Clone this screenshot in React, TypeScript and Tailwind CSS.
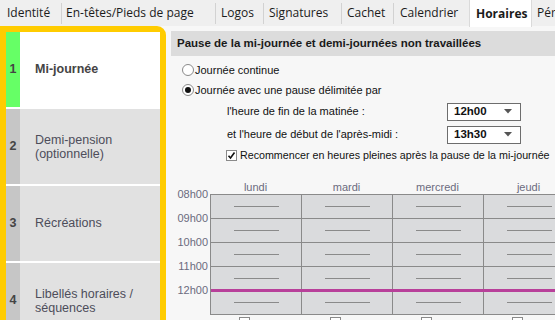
import React from "react";

const days = ["lundi", "mardi", "mercredi", "jeudi"];
const hours = ["08h00", "09h00", "10h00", "11h00", "12h00"];

function Sep() {
  return <div className="w-px h-[21px] bg-[#d2d2d2] shrink-0" />;
}

function Select({ value }: { value: string }) {
  return (
    <div className="w-[74px] h-[18px] border border-[#6d6d6d] bg-white flex items-center pl-[6px] pr-[8px] justify-between">
      <span className="font-bold text-[11.5px] text-[#111]">{value}</span>
      <svg width="8" height="5" viewBox="0 0 8 5">
        <path d="M0 0 L8 0 L4 4.5 Z" fill="#555" />
      </svg>
    </div>
  );
}

export default function App() {
  return (
    <div className="w-[555px] h-[320px] overflow-hidden bg-[#f7f7f7] font-['Liberation_Sans',Arial,sans-serif]">
      {/* Tab bar */}
      <div className="h-[26px] bg-[#efefef] flex items-center font-['Open_Sans',sans-serif] text-[12px] text-[#1b1b1b] whitespace-nowrap">
        <div className="w-[61px] pl-[7px] shrink-0">Identité</div>
        <Sep />
        <div className="w-[153px] pl-[4px] shrink-0">En-têtes/Pieds de page</div>
        <Sep />
        <div className="w-[47px] pl-[5px] shrink-0">Logos</div>
        <Sep />
        <div className="w-[77px] pl-[5px] shrink-0">Signatures</div>
        <Sep />
        <div className="w-[51px] pl-[5px] shrink-0">Cachet</div>
        <Sep />
        <div className="w-[75px] pl-[6px] shrink-0">Calendrier</div>
        <div className="w-[63px] h-[27px] self-start mb-[-1px] bg-white border-x border-[#dadada] pl-[6px] flex items-center font-bold shrink-0">
          Horaires
        </div>
        <div className="pl-[5px] shrink-0">Périodes</div>
      </div>

      <div className="flex items-start">
        {/* Left panel */}
        <div className="w-[166px] h-[320px] shrink-0 border-[6px] border-[#ffcc00] rounded-tr-[9px] bg-white flex flex-col gap-[2px] text-[12.5px] text-[#4d4d5a]">
          <div className="h-[75px] flex bg-white shrink-0">
            <div className="w-[14px] bg-[#66ff66] flex items-center justify-center font-bold text-[#444]">1</div>
            <div className="flex-1 flex items-center pl-[15px] font-bold text-[#444]">Mi-journée</div>
          </div>
          <div className="h-[75px] flex bg-[#e1e1e1] shrink-0">
            <div className="w-[14px] bg-[#c6c6c6] flex items-center justify-center font-bold text-[#444]">2</div>
            <div className="flex-1 flex items-center pl-[15px] leading-[14px]">
              Demi-pension
              <br />
              (optionnelle)
            </div>
          </div>
          <div className="h-[75px] flex bg-[#e1e1e1] shrink-0">
            <div className="w-[14px] bg-[#c6c6c6] flex items-center justify-center font-bold text-[#444]">3</div>
            <div className="flex-1 flex items-center pl-[15px]">Récréations</div>
          </div>
          <div className="h-[75px] flex bg-[#e1e1e1] shrink-0">
            <div className="w-[14px] bg-[#c6c6c6] flex items-center justify-center font-bold text-[#444]">4</div>
            <div className="flex-1 flex items-center pl-[15px] leading-[14px]">
              Libellés horaires /
              <br />
              séquences
            </div>
          </div>
        </div>

        {/* Main */}
        <div className="flex-1 min-w-0 ml-[5px] mt-[5px] text-[11px] text-[#111] whitespace-nowrap">
          <div className="h-[25px] bg-[#dcdcdc] flex items-center pl-[6px] font-bold text-[11.5px] text-[#1a1a1a]">
            Pause de la mi-journée et demi-journées non travaillées
          </div>

          <div className="h-[4px]" />
          <div className="h-[20px] flex items-center pl-[11px] gap-[1px]">
            <div className="w-[12px] h-[12px] rounded-full border border-[#8a8a8a] bg-white" />
            <span>Journée continue</span>
          </div>
          <div className="h-[20px] flex items-center pl-[11px] gap-[1px]">
            <div className="w-[12px] h-[12px] rounded-full border border-[#8a8a8a] bg-white flex items-center justify-center">
              <div className="w-[6px] h-[6px] rounded-full bg-[#111]" />
            </div>
            <span>Journée avec une pause délimitée par</span>
          </div>
          <div className="h-[22px] flex items-center pl-[56px] pt-[1px]">
            <span className="w-[220px]">l'heure de fin de la matinée :</span>
            <Select value="12h00" />
          </div>
          <div className="h-[22px] flex items-center pl-[56px] pt-[3px]">
            <span className="w-[220px]">et l'heure de début de l'après-midi :</span>
            <Select value="13h30" />
          </div>
          <div className="h-[22px] flex items-center pl-[55px] pt-[1px] gap-[3px]">
            <div className="w-[11px] h-[11px] border border-[#8a8a8a] bg-white flex items-center justify-center">
              <svg width="9" height="9" viewBox="0 0 9 9">
                <path d="M1.5 4.8 L3.5 7 L7.5 1.5" stroke="#111" strokeWidth="1.6" fill="none" />
              </svg>
            </div>
            <span className="text-[10.7px]">Recommencer en heures pleines après la pause de la mi-journée</span>
          </div>

          {/* Week grid */}
          <div className="mt-[14px] flex">
            <div className="w-[39px] shrink-0 flex flex-col items-end pr-[2px] pt-[8px] text-[11px] text-[#6b6b7e]">
              {hours.map((h) => (
                <div key={h} className="h-[24px] leading-[12px]">
                  {h}
                </div>
              ))}
            </div>
            <div className="flex flex-col">
              <div className="flex h-[14px]">
                {days.map((d) => (
                  <div key={d} className="w-[91px] shrink-0 text-center text-[11px] leading-[14px] text-[#6b6b7e]">
                    {d}
                  </div>
                ))}
              </div>
              <div className="relative flex border-t border-l border-[#8a8a8a]">
                {days.map((d) => (
                  <div key={d} className="w-[91px] shrink-0 flex flex-col">
                    {hours.map((h) => (
                      <div key={h} className="h-[24px] bg-[#dadbdd] border-r border-b border-[#8a8a8a] flex items-center justify-center">
                        <div className="w-[45px] h-px bg-[#8a8a8a]" />
                      </div>
                    ))}
                  </div>
                ))}
                <div className="absolute left-0 right-0 top-[94px] h-[3px] bg-[#b8409a]" />
              </div>
              <div className="flex pt-[2px]">
                {days.map((d) => (
                  <div key={d} className="w-[91px] shrink-0 pl-[29px]">
                    <div className="w-[11px] h-[11px] border border-[#8a8a8a] bg-white" />
                  </div>
                ))}
              </div>
            </div>
          </div>
        </div>
      </div>
    </div>
  );
}
